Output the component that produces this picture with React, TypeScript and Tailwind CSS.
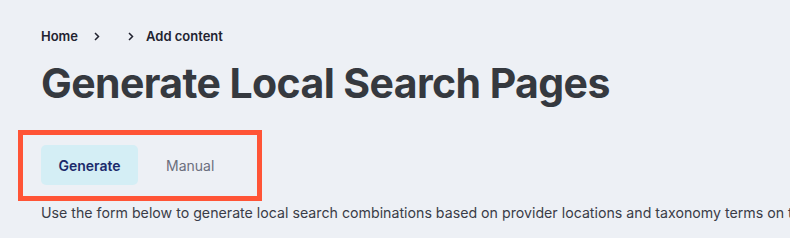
// Local search page generator header

import React from "react";

const font = "font-['Inter','Liberation_Sans',sans-serif]";

function Chevron() {
    return (
        <svg
            className="w-[6px] h-[9px] text-[#222330]"
            viewBox="0 0 6 9"
            fill="none"
            stroke="currentColor"
            strokeWidth="1.5"
        >
            <path d="M1 1l3.5 3.5L1 8" />
        </svg>
    );
}

export default function App() {
    return (
        <div className={`w-[790px] h-[238px] overflow-hidden bg-[#edf0f5] ${font}`}>
            <div className="pl-[41px] pt-[28px]">
                {/* breadcrumb */}
                <nav className="flex items-center h-[17px] text-[13px] font-semibold text-[#222330]">
                    <span>Home</span>
                    <span className="ml-[16px]">
                        <Chevron />
                    </span>
                    <span className="ml-[28px]">
                        <Chevron />
                    </span>
                    <span className="ml-[12px]">Add content</span>
                </nav>

                <h1 className="mt-[12px] text-[41px] leading-[52px] font-bold tracking-[-0.6px] text-[#35393f]">
                    Generate Local Search Pages
                </h1>
            </div>

            {/* tabs (outlined in red) */}
            <div className="ml-[18px] mt-[21px] w-[244px] h-[71px] border-[5px] border-[#ff5436] pl-[18px] pt-[10px]">
                <div className="flex items-center text-[14px]">
                    <button className="w-[97px] h-[40px] rounded-[5px] bg-[#d4eef5] font-semibold text-[#1b2a6b]">
                        Generate
                    </button>
                    <button className="ml-[12px] px-[16px] h-[40px] text-[#6b6e7d]">
                        Manual
                    </button>
                </div>
            </div>

            <p className="pl-[41px] mt-[1px] whitespace-nowrap text-[14.2px] text-[#3a3c47]">
                Use the form below to generate local search combinations based on provider locations and taxonomy terms on the site.
            </p>
        </div>
    );
}
